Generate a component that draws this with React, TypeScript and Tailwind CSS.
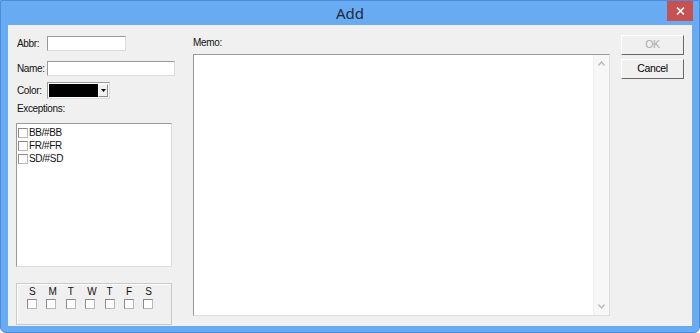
import React from "react";

const font = { fontFamily: '"Liberation Sans", Arial, sans-serif', letterSpacing: "-0.35px" };

function Checkbox() {
  return <div className="w-[10px] h-[10px] bg-white border border-t-[#8a8a8a] border-l-[#8a8a8a] border-b-[#b8b8b8] border-r-[#b8b8b8] shrink-0" />;
}

function Sunken({ className = "", children }: { className?: string; children?: React.ReactNode }) {
  return (
    <div className={"shrink-0 bg-white border border-t-[#9a9a9a] border-l-[#9a9a9a] border-b-[#dcdcdc] border-r-[#dcdcdc] " + className}>
      {children}
    </div>
  );
}

function Button({ label, disabled }: { label: string; disabled?: boolean }) {
  return (
    <div className="w-[63px] h-[20px] bg-[#f0f0f0] border border-t-[#ffffff] border-l-[#ffffff] border-b-[#696969] border-r-[#696969] flex items-center justify-center">
      <span className={disabled ? "text-[#a8a8a8] text-[10.5px]" : "text-black text-[10.5px]"}>{label}</span>
    </div>
  );
}

export default function App() {
  const days = ["S", "M", "T", "W", "T", "F", "S"];
  return (
    <div className="w-[700px] h-[333px] bg-white" style={font}>
      <div className="w-[700px] h-[333px] bg-[#69abf3] border border-[#4b8ddc] rounded-b-[6px] flex flex-col">
        <div className="h-[24px] relative flex items-center justify-center shrink-0">
          <span className="text-[15px] text-[#1f2a3a] mt-[1px] tracking-normal" style={{ fontFamily: '"Noto Sans", "Open Sans", sans-serif' }}>Add</span>
          <div className="absolute right-[6px] top-0 w-[26px] h-[20px] bg-[#c75050] flex items-center justify-center">
            <svg width="9" height="8" viewBox="0 0 9 8">
              <path d="M1 0.5 L8 7.5 M8 0.5 L1 7.5" stroke="white" strokeWidth="1.6" />
            </svg>
          </div>
        </div>
        <div className="flex-1 px-[7px] pb-[6px] flex">
          <div className="flex-1 bg-[#f0f0f0] flex text-[10px] text-[#111]">
            {/* left column */}
            <div className="w-[156px] ml-[8px] flex flex-col">
              <div className="flex items-center mt-[11px] h-[15px]">
                <span className="w-[30px] ml-[1px] shrink-0">Abbr:</span>
                <Sunken className="w-[79px] h-[15px]" />
              </div>
              <div className="flex items-center mt-[10px] h-[15px]">
                <span className="w-[30px] ml-[1px] shrink-0">Name:</span>
                <Sunken className="w-[128px] h-[15px]" />
              </div>
              <div className="flex items-center mt-[6px] h-[17px]">
                <span className="w-[30px] ml-[1px] shrink-0">Color:</span>
                <div className="h-[17px] w-[63px] shrink-0 bg-white border border-t-[#9a9a9a] border-l-[#9a9a9a] border-b-[#dcdcdc] border-r-[#dcdcdc] flex p-[1px]">
                  <div className="w-[49px] bg-black" />
                  <div className="flex-1 bg-[#f0f0f0] border border-t-white border-l-white border-b-[#8a8a8a] border-r-[#8a8a8a] flex items-center justify-center">
                    <svg width="5" height="3" viewBox="0 0 5 3"><path d="M0 0 H5 L2.5 3 Z" fill="black" /></svg>
                  </div>
                </div>
              </div>
              <div className="mt-[3px] ml-[1px] h-[13px] leading-[13px]">Exceptions:</div>
              <Sunken className="mt-[8px] h-[144px] w-[156px] pt-[2px] pl-[1px]">
                {["BB/#BB", "FR/#FR", "SD/#SD"].map((t) => (
                  <div key={t} className="flex items-center h-[13px] gap-[1px]">
                    <Checkbox />
                    <span className="leading-[13px]">{t}</span>
                  </div>
                ))}
              </Sunken>
              <div className="mt-[16px] h-[42px] w-[156px] border border-[#c9c9c9] shadow-[inset_1px_1px_0_#ffffff] flex pl-[10px] pt-[2px]">
                {days.map((d, i) => (
                  <div key={i} className="w-[19.4px] flex flex-col items-start">
                    <span className="text-[10px] leading-[12px] ml-[2px]">{d}</span>
                    <div className="mt-[1px]"><Checkbox /></div>
                  </div>
                ))}
              </div>
            </div>
            {/* memo */}
            <div className="w-[417px] ml-[21px] flex flex-col">
              <div className="mt-[11px] h-[13px] leading-[13px]">Memo:</div>
              <div className="mt-[5px] h-[262px] bg-white border border-t-[#9a9a9a] border-l-[#9a9a9a] border-b-[#dcdcdc] border-r-[#dcdcdc] flex justify-end">
                <div className="w-[16px] h-full bg-[#f7f7f7] border-l border-[#f0f0f0] flex flex-col items-center justify-between py-[6px]">
                  <svg width="7" height="5" viewBox="0 0 7 5"><path d="M0.5 4.5 L3.5 1 L6.5 4.5" stroke="#b8b8b8" strokeWidth="1.3" fill="none" /></svg>
                  <svg width="7" height="5" viewBox="0 0 7 5"><path d="M0.5 0.5 L3.5 4 L6.5 0.5" stroke="#b8b8b8" strokeWidth="1.3" fill="none" /></svg>
                </div>
              </div>
            </div>
            {/* buttons */}
            <div className="ml-[11px] mt-[10px] flex flex-col gap-[4px]">
              <Button label="OK" disabled />
              <Button label="Cancel" />
            </div>
          </div>
        </div>
      </div>
    </div>
  );
}
